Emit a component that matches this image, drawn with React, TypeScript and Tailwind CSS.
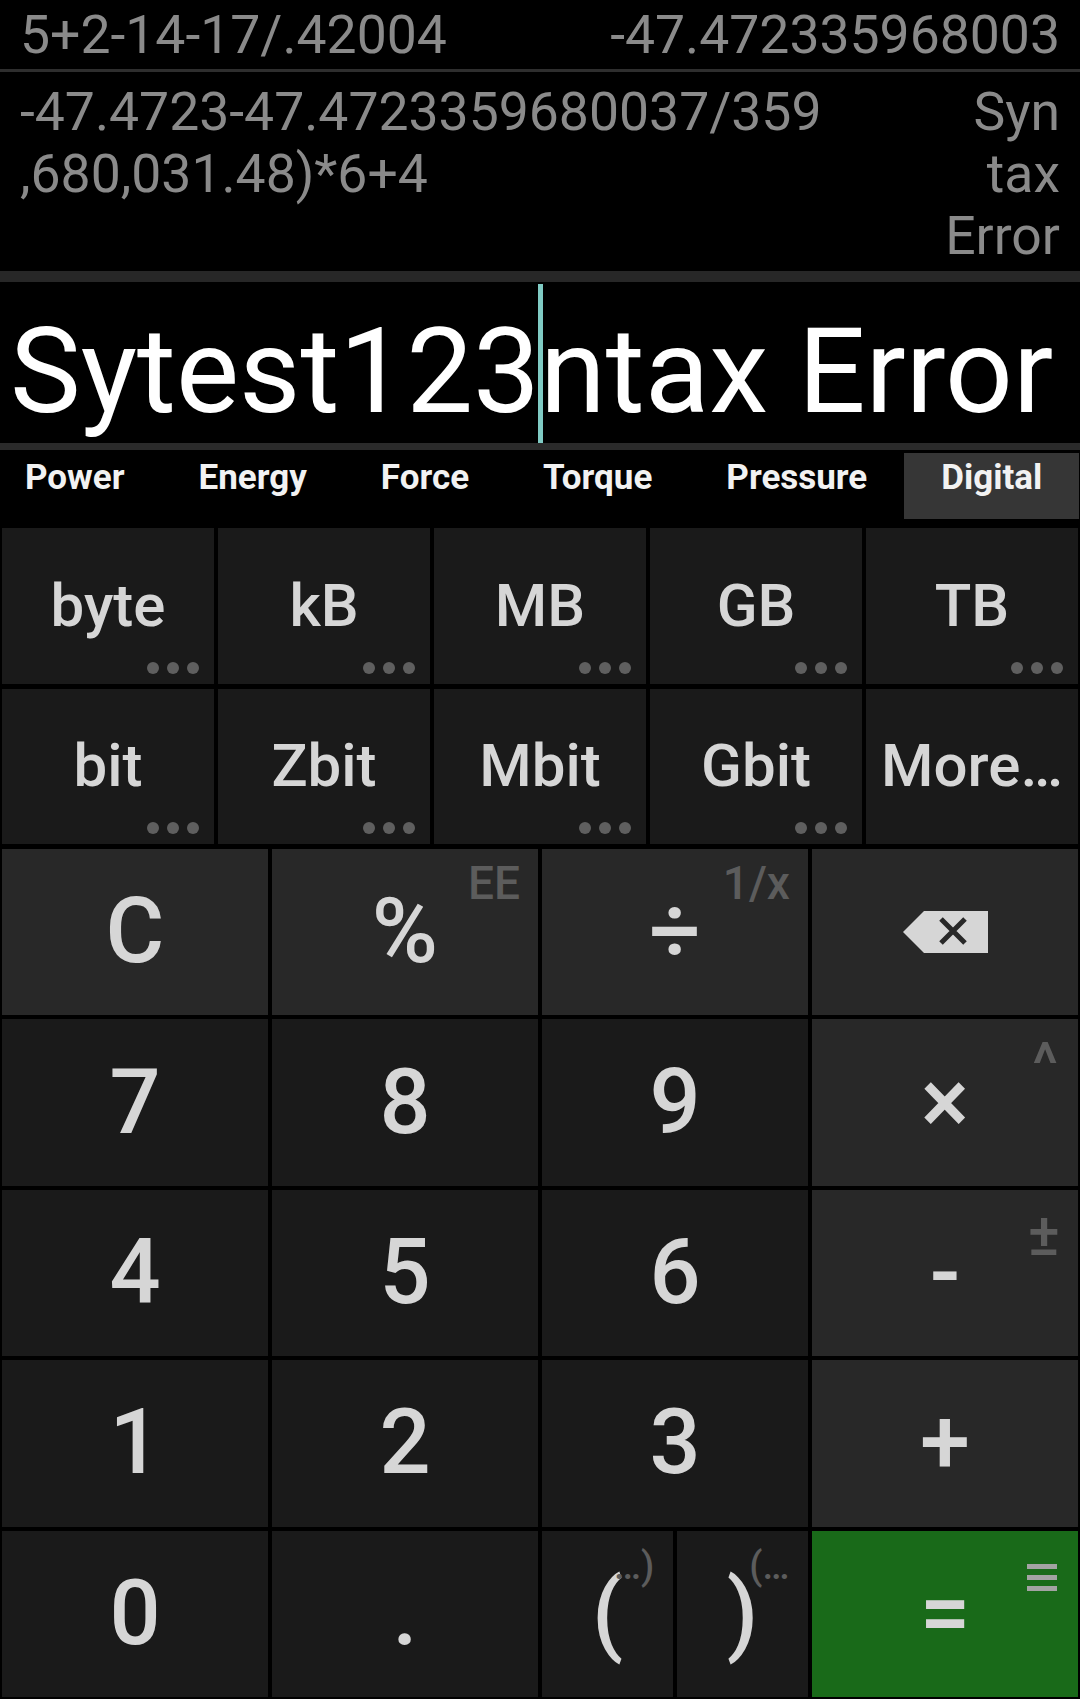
import React from "react";

type UnitDef = { label: string; dots: boolean };

const units: UnitDef[] = [
  { label: "byte", dots: true },
  { label: "kB", dots: true },
  { label: "MB", dots: true },
  { label: "GB", dots: true },
  { label: "TB", dots: true },
  { label: "bit", dots: true },
  { label: "Zbit", dots: true },
  { label: "Mbit", dots: true },
  { label: "Gbit", dots: true },
  { label: "More…", dots: false },
];

const tabs = ["Power", "Energy", "Force", "Torque", "Pressure", "Digital"];

function Dots() {
  return (
    <div className="absolute bottom-[10px] right-[15px] flex gap-[8px]">
      <span className="h-[12px] w-[12px] rounded-full bg-[#5f5f5f]" />
      <span className="h-[12px] w-[12px] rounded-full bg-[#5f5f5f]" />
      <span className="h-[12px] w-[12px] rounded-full bg-[#5f5f5f]" />
    </div>
  );
}

function UnitKey({ label, dots }: UnitDef) {
  return (
    <div className="relative flex items-center justify-center bg-[#1a1a1a] text-[60px] font-medium leading-none text-[#d6d6d6]">
      {label}
      {dots && <Dots />}
    </div>
  );
}

interface KeyProps {
  children: React.ReactNode;
  dark?: boolean;
  sup?: React.ReactNode;
  supClass?: string;
}

function Key({ children, dark = false, sup, supClass = "top-[11px] right-[18px] text-[46px]" }: KeyProps) {
  return (
    <div
      className={`relative flex items-center justify-center text-[90px] font-medium leading-none text-[#d6d6d6] ${
        dark ? "bg-[#1a1a1a]" : "bg-[#282828]"
      }`}
    >
      {children}
      {sup && (
        <span className={`absolute font-medium leading-none text-[#5c5c5c] ${supClass}`}>
          {sup}
        </span>
      )}
    </div>
  );
}

function Backspace() {
  return (
    <svg width="85" height="42" viewBox="0 0 85 42">
      <path d="M0 21 L21 0 H85 V42 H21 Z" fill="#d6d6d6" />
      <path d="M38 8 L62 32 M62 8 L38 32" stroke="#282828" strokeWidth="5" />
    </svg>
  );
}

function Paren({ main, sup }: { main: string; sup: string }) {
  return (
    <div className="flex items-center justify-center bg-[#1a1a1a] text-[#d6d6d6]">
      <span className="relative text-[90px] font-medium leading-none">
        {main}
        <span className="absolute left-[calc(100%-9px)] top-[-22px] text-[38px] font-medium leading-none text-[#5c5c5c]">
          {sup}
        </span>
      </span>
    </div>
  );
}

export default function App() {
  return (
    <div className="h-[1699px] w-[1080px] overflow-hidden bg-black font-[Roboto,sans-serif]">
      {/* history */}
      <div className="flex h-[69px] justify-between px-[20px] pt-[4px] text-[53.5px] leading-[62px] text-[#8a8a8a]">
        <span>5+2-14-17/.42004</span>
        <span>-47.472335968003</span>
      </div>
      <div className="h-[3px] bg-[#2e2e2e]" />
      <div className="flex h-[199px] justify-between px-[20px] pt-[9px] text-[53.5px] leading-[62px] text-[#8a8a8a]">
        <div>
          <div>-47.4723-47.4723359680037/359</div>
          <div>,680,031.48)*6+4</div>
        </div>
        <div className="text-right">
          <div>Syn</div>
          <div>tax</div>
          <div>Error</div>
        </div>
      </div>
      <div className="h-[11px] bg-[#272727]" />

      {/* main display */}
      <div className="flex h-[161px] whitespace-nowrap pl-[10px] text-[119px] leading-none text-white">
        <span className="pt-[30px]">Sytest123</span>
        <div className="relative w-0">
          <div className="absolute left-[-2px] top-[2px] h-[159px] w-[5px] bg-[#80cbc4]" />
        </div>
        <span className="pt-[30px]">ntax Error</span>
      </div>
      <div className="h-[7px] bg-[#2a2a2a]" />

      {/* tabs */}
      <div className="ml-[-12px] flex h-[77px] pt-[3px]">
        {tabs.map((t) => (
          <div
            key={t}
            className={`h-[66px] px-[37px] pt-[4px] text-[35px] font-bold leading-[41px] text-[#f2f2f2] ${
              t === "Digital" ? "bg-[#363636]" : ""
            }`}
          >
            {t}
          </div>
        ))}
      </div>

      {/* keypad */}
      <div className="px-[2px] pt-[1px]">
        <div className="grid h-[316px] grid-cols-5 grid-rows-2 gap-x-[4px] gap-y-[5px]">
          {units.map((u) => (
            <UnitKey key={u.label} {...u} />
          ))}
        </div>

        <div className="mt-[5px] grid h-[848px] grid-cols-4 grid-rows-5 gap-[4px]">
          <Key>C</Key>
          <Key sup="EE">%</Key>
          <Key sup="1/x">÷</Key>
          <Key>
            <Backspace />
          </Key>

          <Key dark>7</Key>
          <Key dark>8</Key>
          <Key dark>9</Key>
          <Key sup="^" supClass="top-[15px] right-[20px] text-[60px]">×</Key>

          <Key dark>4</Key>
          <Key dark>5</Key>
          <Key dark>6</Key>
          <Key sup="±" supClass="top-[15px] right-[18px] text-[60px]">-</Key>

          <Key dark>1</Key>
          <Key dark>2</Key>
          <Key dark>3</Key>
          <Key>+</Key>

          <Key dark>0</Key>
          <Key dark>.</Key>
          <div className="grid grid-cols-2 gap-[4px]">
            <Paren main="(" sup="…)" />
            <Paren main=")" sup="(…" />
          </div>
          <div className="relative flex items-center justify-center bg-[#196a19] text-[90px] font-medium leading-none text-[#d6d6d6]">
            =
            <div className="absolute right-[21px] top-[33px] flex w-[30px] flex-col gap-[6px]">
              <span className="h-[5px] bg-[#a3a3a3]" />
              <span className="h-[5px] bg-[#a3a3a3]" />
              <span className="h-[5px] bg-[#a3a3a3]" />
            </div>
          </div>
        </div>
      </div>
    </div>
  );
}
